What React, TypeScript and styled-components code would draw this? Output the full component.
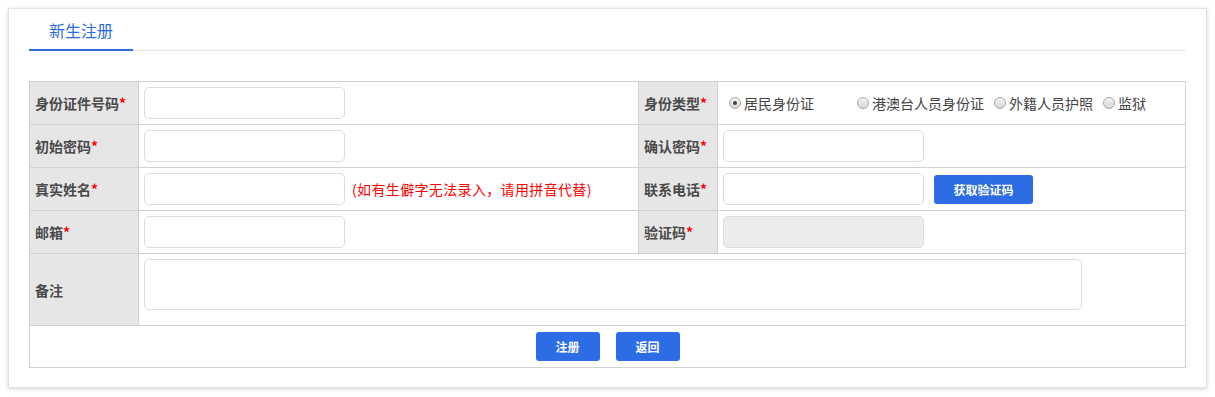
import React, {useState} from "react";
import styled, {createGlobalStyle} from "styled-components";

const GlobalStyle = createGlobalStyle`
	html, body { margin: 0; padding: 0; background: #fff; }
	body { padding: 8px; font-family: "Noto Sans CJK SC", "Liberation Sans", sans-serif; }
	* { box-sizing: border-box; }
`

const Card = styled.div`
	background: #fff;
	border: 1px solid #e2e2e2;
	box-shadow: 0 1px 4px rgba(0,0,0,.18);
	padding: 0 20px 20px 20px;
	height: 380px;
`
const TabBar = styled.div`
	display: flex;
	height: 42px;
	border-bottom: 1px solid #e4e4e4;
	margin-bottom: 30px;
`
const Tab = styled.div<{active?: boolean}>`
	width: 104px;
	display: flex;
	align-items: center;
	justify-content: center;
	font-size: 16px;
	color: #2d6ce0;
	border-bottom: 2px solid ${p => p.active ? "#2d6ce0" : "transparent"};
	margin-bottom: -1px;
	padding-top: 2px;
`
const Table = styled.table`
	width: 100%;
	border-collapse: collapse;
	table-layout: fixed;
	font-size: 14px;
	color: #444;
`
const Row = styled.tr<{tall?: boolean}>`
	height: ${p => p.tall ? 72 : 43}px;
`
const Label = styled.td<{w: number}>`
	width: ${p => p.w}px;
	background: #e6e6e6;
	border: 1px solid #d2d2d2;
	padding: 0 0 0 5px;
	font-weight: bold;
	color: #4a4a4a;
	white-space: nowrap;
`
const Star = styled.span`
	color: #f00;
`
const Cell = styled.td<{w?: number; top?: boolean}>`
	${p => p.w ? `width: ${p.w}px;` : ""}
	border: 1px solid #d2d2d2;
	padding: ${p => p.top ? "5px 5px 0" : "0 5px"};
	vertical-align: ${p => p.top ? "top" : "middle"};
	white-space: nowrap;
`
const Line = styled.div`
	display: flex;
	align-items: center;
`
const Input = styled.input<{disabled?: boolean}>`
	width: 201px;
	height: 32px;
	border: 1px solid #dcdcdc;
	border-radius: 5px;
	background: ${p => p.disabled ? "#ececec" : "#fff"};
	outline: none;
	padding: 0 6px;
	font-size: 14px;
`
const TextArea = styled.textarea`
	display: block;
	width: 938px;
	height: 51px;
	border: 1px solid #dcdcdc;
	border-radius: 5px;
	resize: none;
	outline: none;
	margin: 0;
`
const Hint = styled.span`
	color: #f00;
	margin-left: 7px;
	font-size: 14px;
	letter-spacing: 0.35px;
`
const Button = styled.button<{w?: number}>`
	width: ${p => p.w ?? 64}px;
	height: 29px;
	border: none;
	border-radius: 3px;
	background: #2c6de6;
	color: #fff;
	font-weight: bold;
	font-size: 12px;
	font-family: inherit;
	cursor: pointer;
	padding: 0;
`
const RadioGroup = styled.div`
	display: flex;
	align-items: center;
	padding-left: 6px;
`
const RadioOption = styled.label<{w?: number}>`
	display: flex;
	align-items: center;
	gap: 3px;
	margin-right: 10px;
	${p => p.w ? `width: ${p.w}px; margin-right: 0;` : ""}
	color: #444;
	cursor: pointer;
`
const Dot = styled.span<{checked: boolean}>`
	width: 12px;
	height: 12px;
	border-radius: 50%;
	border: 1px solid #a8a8a8;
	background: linear-gradient(#f4f4f4, #d6d6d6);
	display: flex;
	align-items: center;
	justify-content: center;
	&::after {
		content: "";
		width: 4px;
		height: 4px;
		border-radius: 50%;
		background: #444;
		display: ${p => p.checked ? "block" : "none"};
	}
`
const Footer = styled.td`
	border: 1px solid #d2d2d2;
	height: 42px;
	text-align: center;
	& > div { display: flex; justify-content: center; gap: 16px; }
`
const Spacer = styled.span`
	width: 10px;
`

const types = ["居民身份证", "港澳台人员身份证", "外籍人员护照", "监狱"];

const App = () => {
	const [type, setType] = useState(0);
	return (
		<>
			<GlobalStyle/>
			<Card>
				<TabBar><Tab active>新生注册</Tab></TabBar>
				<Table>
					<tbody>
						<Row>
							<Label w={109}>身份证件号码<Star>*</Star></Label>
							<Cell w={500}><Input/></Cell>
							<Label w={79}>身份类型<Star>*</Star></Label>
							<Cell>
								<RadioGroup>
									{types.map((t, i) =>
										<RadioOption key={t} w={i === 0 ? 128 : undefined} onClick={() => setType(i)}>
											<Dot checked={type === i}/>{t}
										</RadioOption>
									)}
								</RadioGroup>
							</Cell>
						</Row>
						<Row>
							<Label w={109}>初始密码<Star>*</Star></Label>
							<Cell><Input type="password"/></Cell>
							<Label w={79}>确认密码<Star>*</Star></Label>
							<Cell><Input type="password"/></Cell>
						</Row>
						<Row>
							<Label w={109}>真实姓名<Star>*</Star></Label>
							<Cell><Line><Input/><Hint>(如有生僻字无法录入，请用拼音代替)</Hint></Line></Cell>
							<Label w={79}>联系电话<Star>*</Star></Label>
							<Cell><Line><Input/><Spacer/><Button w={99}>获取验证码</Button></Line></Cell>
						</Row>
						<Row>
							<Label w={109}>邮箱<Star>*</Star></Label>
							<Cell><Input/></Cell>
							<Label w={79}>验证码<Star>*</Star></Label>
							<Cell><Input disabled/></Cell>
						</Row>
						<Row tall>
							<Label w={109}>备注</Label>
							<Cell colSpan={3} top><TextArea/></Cell>
						</Row>
						<tr>
							<Footer colSpan={4}>
								<div><Button>注册</Button><Button>返回</Button></div>
							</Footer>
						</tr>
					</tbody>
				</Table>
			</Card>
		</>
	);
};

export default App;
